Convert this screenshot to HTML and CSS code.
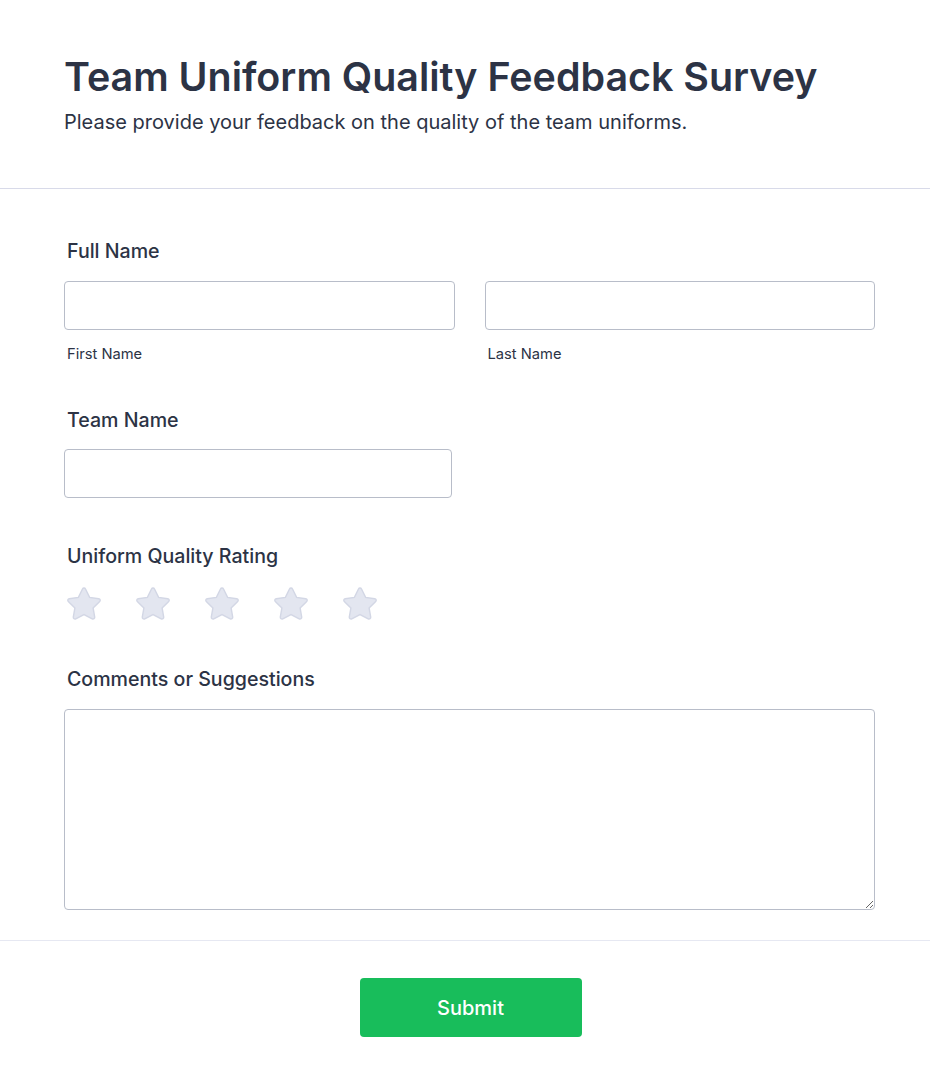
FILE: index.html
```html
<!DOCTYPE html>
<html lang="en">
<head>
<meta charset="utf-8">
<title>Team Uniform Quality Feedback Survey</title>
<link rel="stylesheet" href="styles.css">
</head>
<body>
<div class="page">
  <header class="header">
    <h1 class="title">Team Uniform Quality Feedback Survey</h1>
    <p class="subtitle">Please provide your feedback on the quality of the team uniforms.</p>
  </header>
  <form class="form">
    <div class="field field-name">
      <label class="label">Full Name</label>
      <div class="name-row">
        <div class="name-col">
          <input class="input" type="text">
          <span class="sublabel">First Name</span>
        </div>
        <div class="name-col">
          <input class="input" type="text">
          <span class="sublabel">Last Name</span>
        </div>
      </div>
    </div>
    <div class="field field-team">
      <label class="label">Team Name</label>
      <input class="input input-team" type="text">
    </div>
    <div class="field field-rating">
      <label class="label">Uniform Quality Rating</label>
      <div class="stars">
        <svg class="star" viewBox="0 0 40 38"><path d="M20 2.2c.7 0 1.3.4 1.6 1l4.3 8.8 9.7 1.4c1.4.2 2 2 1 3l-7 6.8 1.7 9.6c.2 1.4-1.3 2.5-2.6 1.8L20 30.1l-8.7 4.5c-1.3.7-2.8-.4-2.6-1.8l1.7-9.6-7-6.8c-1-1-.4-2.8 1-3l9.7-1.4 4.3-8.8c.3-.6.9-1 1.6-1z"/></svg>
        <svg class="star" viewBox="0 0 40 38"><path d="M20 2.2c.7 0 1.3.4 1.6 1l4.3 8.8 9.7 1.4c1.4.2 2 2 1 3l-7 6.8 1.7 9.6c.2 1.4-1.3 2.5-2.6 1.8L20 30.1l-8.7 4.5c-1.3.7-2.8-.4-2.6-1.8l1.7-9.6-7-6.8c-1-1-.4-2.8 1-3l9.7-1.4 4.3-8.8c.3-.6.9-1 1.6-1z"/></svg>
        <svg class="star" viewBox="0 0 40 38"><path d="M20 2.2c.7 0 1.3.4 1.6 1l4.3 8.8 9.7 1.4c1.4.2 2 2 1 3l-7 6.8 1.7 9.6c.2 1.4-1.3 2.5-2.6 1.8L20 30.1l-8.7 4.5c-1.3.7-2.8-.4-2.6-1.8l1.7-9.6-7-6.8c-1-1-.4-2.8 1-3l9.7-1.4 4.3-8.8c.3-.6.9-1 1.6-1z"/></svg>
        <svg class="star" viewBox="0 0 40 38"><path d="M20 2.2c.7 0 1.3.4 1.6 1l4.3 8.8 9.7 1.4c1.4.2 2 2 1 3l-7 6.8 1.7 9.6c.2 1.4-1.3 2.5-2.6 1.8L20 30.1l-8.7 4.5c-1.3.7-2.8-.4-2.6-1.8l1.7-9.6-7-6.8c-1-1-.4-2.8 1-3l9.7-1.4 4.3-8.8c.3-.6.9-1 1.6-1z"/></svg>
        <svg class="star" viewBox="0 0 40 38"><path d="M20 2.2c.7 0 1.3.4 1.6 1l4.3 8.8 9.7 1.4c1.4.2 2 2 1 3l-7 6.8 1.7 9.6c.2 1.4-1.3 2.5-2.6 1.8L20 30.1l-8.7 4.5c-1.3.7-2.8-.4-2.6-1.8l1.7-9.6-7-6.8c-1-1-.4-2.8 1-3l9.7-1.4 4.3-8.8c.3-.6.9-1 1.6-1z"/></svg>
      </div>
    </div>
    <div class="field field-comments">
      <label class="label">Comments or Suggestions</label>
      <textarea class="textarea"></textarea>
    </div>
  </form>
  <div class="footer">
    <button class="submit" type="button">Submit</button>
  </div>
</div>
</body>
</html>
```
FILE: styles.css
```css
* { box-sizing: border-box; }
html, body { margin: 0; padding: 0; background: #fff; }
body {
  font-family: Inter, "Noto Sans", sans-serif;
  color: #2c3345;
}
.page { width: 930px; }
.header {
  padding: 53px 64px 0;
  height: 189px;
  border-bottom: 1px solid #d8dae9;
}
.title {
  margin: 0;
  font-size: 39.4px;
  font-weight: 600;
  line-height: 48px;
  color: #2c3345;
}
.subtitle {
  margin: 9px 0 0;
  font-size: 20px;
  line-height: 24px;
  color: #2c3345;
}
.form {
  padding: 49px 55px 30px 64px;
  border-bottom: 1px solid #e6e8f2;
}
.field { display: flex; flex-direction: column; }
.label {
  display: block;
  font-size: 19.6px;
  font-weight: 500;
  line-height: 26px;
  padding-left: 3px;
  color: #2c3345;
  margin-bottom: 17px;
}
.name-row { display: flex; gap: 30px; }
.name-col { display: flex; flex-direction: column; width: 391px; }
.input {
  display: block;
  width: 100%;
  height: 49px;
  border: 1px solid #b8bdc9;
  border-radius: 4px;
  background: #fff;
  margin: 0;
  font-family: inherit;
}
.input-team { width: 388px; }
.sublabel {
  font-size: 14.7px;
  line-height: 18px;
  padding-left: 3px;
  margin-top: 15px;
  color: #2c3345;
}
.field-team { margin-top: 44px; }
.field-team .label { margin-bottom: 16px; }
.field-rating { margin-top: 45px; }
.field-rating .label { margin-bottom: 17px; }
.stars { display: flex; gap: 31px; padding-left: 1px; }
.star { width: 38px; height: 36px; fill: #e3e6f0; stroke: #d3d7e5; stroke-width: 1.5; }
.field-comments { margin-top: 44px; }
.textarea {
  display: block;
  width: 811px;
  height: 201px;
  border: 1px solid #b8bdc9;
  border-radius: 4px;
  margin: 0;
  resize: vertical;
  font-family: inherit;
}
.footer {
  display: flex;
  justify-content: center;
  padding: 37px 0 50px;
}
.submit {
  width: 222px;
  height: 59px;
  background: #18bd5b;
  color: #fff;
  border: none;
  border-radius: 4px;
  font-family: inherit;
  font-size: 20px;
  font-weight: 500;
  margin-left: 11px;
  cursor: pointer;
}
```
